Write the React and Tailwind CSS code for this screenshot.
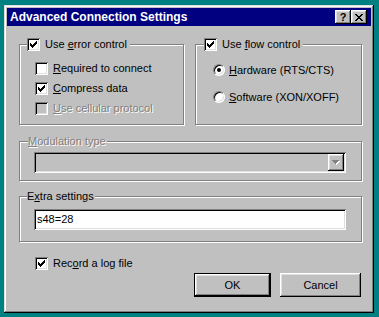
import React from "react";

const raised =
  "shadow-[inset_-1px_-1px_0_#000,inset_1px_1px_0_#fff,inset_-2px_-2px_0_#808080,inset_2px_2px_0_#dfdfdf]";
const sunken =
  "shadow-[inset_1px_1px_0_#808080,inset_-1px_-1px_0_#fff,inset_2px_2px_0_#000,inset_-2px_-2px_0_#dfdfdf]";
const etched = "border border-[#808080] shadow-[inset_1px_1px_0_#fff,1px_1px_0_#fff]";
const dim = "text-[#808080] [text-shadow:1px_1px_0_#fff]";

function Check({ checked, disabled }) {
  const cols = [2, 3, 4, 3, 2, 1, 0];
  return (
    <div className={`relative w-[13px] h-[13px] shrink-0 ${disabled ? "bg-[#c0c0c0]" : "bg-white"} ${sunken}`}>
      {checked && (
        <svg width="7" height="7" className="absolute left-[3px] top-[3px]" shapeRendering="crispEdges">
          {cols.map((y, x) => (
            <rect key={x} x={x} y={y} width="1" height="3" fill="#000" />
          ))}
        </svg>
      )}
    </div>
  );
}

function Radio({ checked }) {
  return (
    <div className="relative w-[12px] h-[12px] shrink-0 rounded-full bg-white border border-t-[#808080] border-l-[#808080] border-r-white border-b-white shadow-[inset_1px_1px_0_#000,inset_-1px_-1px_0_#dfdfdf]">
      {checked && <div className="absolute left-[3px] top-[3px] w-[4px] h-[4px] rounded-full bg-black" />}
    </div>
  );
}

function Row({ children, label, disabled }) {
  return (
    <div className="flex items-center h-[13px] gap-[5px]">
      {children}
      <span className={`leading-[13px] ${disabled ? dim : ""}`}>{label}</span>
    </div>
  );
}

export default function App() {
  return (
    <div className="w-[379px] h-[317px] bg-[#008080] pl-[4px] pt-[5px] font-['Liberation_Sans',Arial,sans-serif] text-[11px] text-black">
      <div className={`w-[370px] h-[308px] bg-[#c0c0c0] p-[3px] shadow-[inset_-1px_-1px_0_#000,inset_1px_1px_0_#dfdfdf,inset_-2px_-2px_0_#808080,inset_2px_2px_0_#fff]`}>
        {/* Title bar */}
        <div className="h-[18px] bg-[#000080] flex items-center pl-[3px] pr-[4px]">
          <span className="text-white font-bold text-[12px] leading-none flex-1">Advanced Connection Settings</span>
          <div className={`w-[16px] h-[14px] bg-[#c0c0c0] ${raised} flex items-center justify-center font-bold text-[11px] leading-none`}>?</div>
          <div className={`w-[16px] h-[14px] bg-[#c0c0c0] ${raised} flex items-center justify-center`}>
            <svg width="8" height="7" shapeRendering="crispEdges">
              <path d="M0 0h2v1h-2zM6 0h2v1h-2zM1 1h2v1h-2zM5 1h2v1h-2zM2 2h4v1h-4zM3 3h2v1h-2zM2 4h4v1h-4zM1 5h2v1h-2zM5 5h2v1h-2zM0 6h2v1h-2zM6 6h2v1h-2z" fill="#000" />
            </svg>
          </div>
        </div>

        <div className="pl-[12px]">
          {/* Top groups */}
          <div className="flex gap-[11px] mt-[18px]">
            <div className={`relative w-[165px] h-[81px] ${etched} pl-[15px] pt-[17px] flex flex-col gap-[7px]`}>
              <div className="absolute -top-[7px] left-[7px] bg-[#c0c0c0] pr-[3px]">
                <Row label={<>Use <u>e</u>rror control</>}><Check checked /></Row>
              </div>
              <Row label={<><u>R</u>equired to connect</>}><Check /></Row>
              <Row label={<><u>C</u>ompress data</>}><Check checked /></Row>
              <Row label={<><u>U</u>se cellular protocol</>} disabled><Check disabled /></Row>
            </div>
            <div className={`relative w-[167px] h-[81px] ${etched} pl-[17px] pt-[19px] flex flex-col gap-[15px]`}>
              <div className="absolute -top-[7px] left-[8px] bg-[#c0c0c0] pr-[3px]">
                <Row label={<>Use <u>f</u>low control</>}><Check checked /></Row>
              </div>
              <div className="flex items-center h-[12px] gap-[4px]">
                <Radio checked />
                <span><u>H</u>ardware (RTS/CTS)</span>
              </div>
              <div className="flex items-center h-[12px] gap-[4px]">
                <Radio />
                <span><u>S</u>oftware (XON/XOFF)</span>
              </div>
            </div>
          </div>

          {/* Modulation type */}
          <div className={`relative w-[343px] h-[40px] mt-[16px] ${etched} pl-[14px] pt-[10px]`}>
            <span className={`absolute -top-[7px] left-[8px] bg-[#c0c0c0] pr-[1px] leading-[13px] ${dim}`}>
              <u>M</u>odulation type
            </span>
            <div className={`w-[312px] h-[21px] bg-[#c0c0c0] ${sunken} flex justify-end p-[2px]`}>
              <div className={`w-[16px] h-[17px] bg-[#c0c0c0] ${raised} flex items-center justify-center`}>
                <svg width="8" height="5" shapeRendering="crispEdges">
                  <path d="M1 1h7v1h-7zM2 2h5v1h-5zM3 3h3v1h-3zM4 4h1v1h-1z" fill="#fff" />
                  <path d="M0 0h7v1h-7zM1 1h5v1h-5zM2 2h3v1h-3zM3 3h1v1h-1z" fill="#808080" />
                </svg>
              </div>
            </div>
          </div>

          {/* Extra settings */}
          <div className={`relative w-[343px] h-[46px] mt-[15px] ${etched} pl-[14px] pt-[12px]`}>
            <span className="absolute -top-[7px] left-[7px] bg-[#c0c0c0] pr-[1px] leading-[13px]">
              E<u>x</u>tra settings
            </span>
            <div className={`w-[312px] h-[21px] bg-white ${sunken} flex items-center pl-[3px]`}>s48=28</div>
          </div>

          {/* Log file */}
          <div className="mt-[15px] pl-[16px]">
            <Row label={<>Rec<u>o</u>rd a log file</>}><Check checked /></Row>
          </div>

          {/* Buttons */}
          <div className="flex justify-end gap-[9px] mt-[3px] pr-[10px]">
            <div className="w-[77px] h-[24px] border border-black">
              <div className={`w-full h-full ${raised} flex items-center justify-center`}>OK</div>
            </div>
            <div className={`w-[81px] h-[24px] ${raised} flex items-center justify-center`}>Cancel</div>
          </div>
        </div>
      </div>
    </div>
  );
}
